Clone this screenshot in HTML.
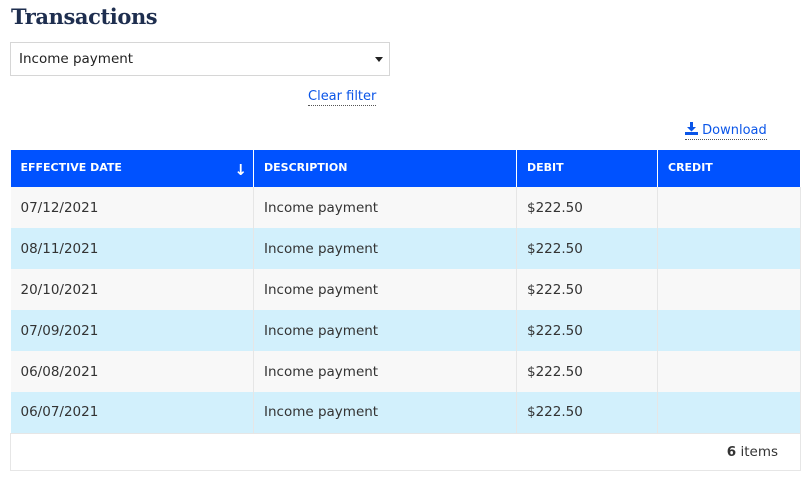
<!DOCTYPE html>
<html><head><style>
body{margin:0;background:#fff;font-family:"DejaVu Sans","Liberation Sans",sans-serif;color:#333;width:809px;height:480px;overflow:hidden;position:relative}
h1{position:absolute;left:11px;top:4px;margin:0;font-family:"DejaVu Serif","Liberation Serif",serif;font-size:21px;font-weight:bold;color:#1e2e4f;letter-spacing:-0.4px}
.sel{position:absolute;left:10px;top:42px;width:378px;height:32px;border:1px solid #d6d6d6;font-size:13.5px;line-height:32px;box-sizing:content-box}
.sel span{margin-left:8px;color:#222}
.sel i{position:absolute;right:6px;top:14px;border:4px solid transparent;border-top:5px solid #222;width:0;height:0}
.lnk{position:absolute;color:#0a55e8;font-size:13px;border-bottom:1px dotted #555;line-height:17px}
table{position:absolute;left:10px;top:150px;border-collapse:collapse;width:791px;font-size:13.5px}
th{background:#0052ff;color:#fff;font-size:11px;font-weight:bold;text-align:left;height:37px;padding:0 10px;border-right:1px solid #fff;box-sizing:border-box;vertical-align:middle;padding-bottom:3px}
td{height:41px;padding:0 10px;border-right:1px solid #e6e6e6;box-sizing:border-box;color:#333}
tr.a td{background:#f8f8f8}
tr.b td{background:#d2f0fc}
.foot td{background:#fff;border:1px solid #e6e6e6;text-align:right;height:37px;padding-right:22px}
</style></head><body>
<h1>Transactions</h1>
<div class="sel"><span>Income payment</span><i></i></div>
<div class="lnk" style="left:308px;top:88px">Clear filter</div>
<div class="lnk" style="left:685px;top:122px"><svg width="13" height="13" viewBox="0 0 13 13" style="vertical-align:-1px"><path d="M5 0h3v5h3l-4.5 4.5L2 5h3z" fill="#0a55e8"/><rect x="0" y="10" width="13" height="3" fill="#0a55e8"/></svg> Download</div>
<table>
<tr><th style="width:243px;position:relative">EFFECTIVE DATE<span style="position:absolute;right:6px;top:11px;font-size:15px">↓</span></th><th style="width:263px">DESCRIPTION</th><th style="width:141px">DEBIT</th><th>CREDIT</th></tr>
<tr class="a"><td>07/12/2021</td><td>Income payment</td><td>$222.50</td><td></td></tr>
<tr class="b"><td>08/11/2021</td><td>Income payment</td><td>$222.50</td><td></td></tr>
<tr class="a"><td>20/10/2021</td><td>Income payment</td><td>$222.50</td><td></td></tr>
<tr class="b"><td>07/09/2021</td><td>Income payment</td><td>$222.50</td><td></td></tr>
<tr class="a"><td>06/08/2021</td><td>Income payment</td><td>$222.50</td><td></td></tr>
<tr class="b"><td>06/07/2021</td><td>Income payment</td><td>$222.50</td><td></td></tr>
<tr class="foot"><td colspan="4"><b>6</b> items</td></tr>
</table>
</body></html>
